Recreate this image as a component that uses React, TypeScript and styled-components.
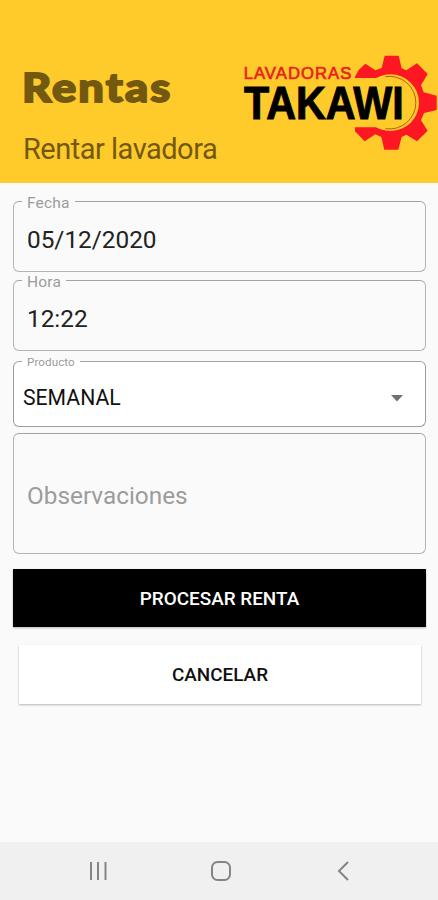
import React from "react";
import styled, { createGlobalStyle, css } from "styled-components";

const GlobalStyle = createGlobalStyle`
  * { box-sizing: border-box; }
  body { margin: 0; background: #fafafa; }
  button { border: 0; border-radius: 0; cursor: pointer; }
`;

const Screen = styled.div`
  display: flex;
  flex-direction: column;
  width: 438px;
  height: 900px;
  overflow: hidden;
  background: #fafafa;
  font-family: Roboto, "Liberation Sans", sans-serif;
`;

const Header = styled.header`
  display: flex;
  flex: none;
  height: 183px;
  background: #ffcb2b;
`;

const Titles = styled.div`
  width: 230px;
  padding: 62px 0 0 22px;
  color: #73590f;
  white-space: nowrap;
`;

const Title = styled.h1`
  margin: 0;
  width: max-content;
  font: 900 40px/50px Lato, sans-serif;
  letter-spacing: 1.9px;
  transform: scaleX(1.13);
  transform-origin: left;
  -webkit-text-stroke: 1.8px #73590f;
  stroke-linejoin: round;
`;

const Subtitle = styled.h2`
  margin: 19px 0 0 1px;
  font: 400 29px/36px Roboto, sans-serif;
  letter-spacing: -0.5px;
`;

const Logo = styled.svg`
  flex: none;
  width: 208px;
  height: 130px;
  margin-top: 40px;
`;

const Form = styled.main`
  display: flex;
  flex-direction: column;
  flex: 1;
  padding: 10px 12px 0 13px;
`;

const Field = styled.fieldset<{ $height: number; $gap: number; $white?: boolean; $inset?: number }>`
  flex: none;
  min-width: 0;
  height: ${(p) => p.$height}px;
  margin: 0 0 ${(p) => p.$gap}px;
  padding: 0 22px 0 ${(p) => p.$inset ?? 13}px;
  border: 1px solid ${(p) => (p.$white ? "#9c9c9c" : "#b4b4b4")};
  border-top-color: #a3a3a3;
  border-radius: 6px;
  ${(p) => p.$white && css`background: #fff;`}
`;

const Legend = styled.legend<{ $small?: boolean; $inset?: number }>`
  height: ${(p) => (p.$small ? 12 : 16)}px;
  margin-left: ${(p) => p.$inset ?? -5}px;
  padding: 0 5px;
  color: #9c9c9c;
  font-size: ${(p) => (p.$small ? 11.6 : 15.5)}px;
  line-height: ${(p) => (p.$small ? 14 : 21)}px;
  letter-spacing: ${(p) => (p.$small ? 0.1 : 0.2)}px;
`;

const Row = styled.div<{ $top: number; $tone?: string; $size?: number }>`
  display: flex;
  align-items: center;
  justify-content: space-between;
  height: 30px;
  margin-top: ${(p) => p.$top}px;
  color: ${(p) => p.$tone ?? "#222"};
  font-size: ${(p) => p.$size ?? 24.35}px;
  line-height: 30px;
`;

const Arrow = styled.svg`
  width: 12px;
  height: 7px;
`;

const Button = styled.button<{ $primary?: boolean }>`
  flex: none;
  height: ${(p) => (p.$primary ? 58 : 59)}px;
  margin: ${(p) => (p.$primary ? "0" : "18px 5px 0 6px")};
  padding: ${(p) => (p.$primary ? "2px 0 0" : "0")};
  background: ${(p) => (p.$primary ? "#000" : "#fff")};
  color: ${(p) => (p.$primary ? "#fff" : "#111")};
  font: 500 18.9px/24px Roboto, sans-serif;
  box-shadow: 0 1px 2px rgba(0, 0, 0, 0.28);
`;

const NavBar = styled.nav`
  display: flex;
  flex: none;
  align-items: center;
  height: 58px;
  padding: 0 84px 0 87px;
  justify-content: space-between;
  background: #f0f0f0;
`;

const NavIcon = styled.svg`
  width: 22px;
  height: 22px;
  fill: none;
  stroke: #858585;
  stroke-width: 2;
`;

function TakawiLogo() {
  return (
    <Logo viewBox="0 0 624 390" role="img" aria-label="Lavadoras Takawi">
      <path
        fill="#fc1722"
        d="M375 110 L386 90 L406 71 L436 91 L455 84 L464 47 L506 47 L515 85 L529 91 L561 70 L593 102 L573 136 L581 157 L620 167 V210 L582 219 L573 241 L593 272 L561 304 L529 284 L515 291 L505 329 H463 L454 291 L436 283 L404 304 L375 274 V262 H438 A83 83 0 1 0 438 114 H375Z"
      />
      <circle cx="482" cy="188" r="85" fill="#ffcb2b" />
      <path d="M466 110 A79 79 0 1 1 466 266" fill="none" stroke="#b85b16" strokeWidth="3" />
      <text x="41" y="116" textLength="323" lengthAdjust="spacing" fontFamily="Liberation Sans" fontSize="50" fill="#e9221b" stroke="#e9221b" strokeWidth="2">
        LAVADORAS
      </text>
      <text x="42" y="237" textLength="479" lengthAdjust="spacingAndGlyphs" fontFamily="Liberation Sans" fontWeight="700" fontSize="136" fill="#000" stroke="#000" strokeWidth="3">
        TAKAWI
      </text>
    </Logo>
  );
}

export default function App() {
  return (
    <>
      <GlobalStyle />
      <Screen>
        <Header>
          <Titles>
            <Title>Rentas</Title>
            <Subtitle>Rentar lavadora</Subtitle>
          </Titles>
          <TakawiLogo />
        </Header>
        <Form>
          <Field $height={79} $gap={0}>
            <Legend>Fecha</Legend>
            <Row $top={16}>05/12/2020</Row>
          </Field>
          <Field $height={79} $gap={4}>
            <Legend>Hora</Legend>
            <Row $top={16}>12:22</Row>
          </Field>
          <Field $height={72} $gap={6} $white $inset={9}>
            <Legend $small $inset={-1}>Producto</Legend>
            <Row $top={16} $tone="#111" $size={21.2}>
              SEMANAL
              <Arrow viewBox="0 0 12 7"><path d="M0 0H12L6 6.5Z" fill="#707070" /></Arrow>
            </Row>
          </Field>
          <Field $height={121} $gap={15}>
            <Row $top={47} $tone="#9c9c9c">Observaciones</Row>
          </Field>
          <Button $primary>PROCESAR RENTA</Button>
          <Button>CANCELAR</Button>
        </Form>
        <NavBar>
          <NavIcon viewBox="0 0 22 22"><path d="M4 2V20M11 2V20M18.5 2V20" /></NavIcon>
          <NavIcon viewBox="0 0 22 22"><rect x="2" y="2" width="18" height="18" rx="5.5" /></NavIcon>
          <NavIcon viewBox="0 0 22 22"><path d="M16 2L7 11L16 20" /></NavIcon>
        </NavBar>
      </Screen>
    </>
  );
}
